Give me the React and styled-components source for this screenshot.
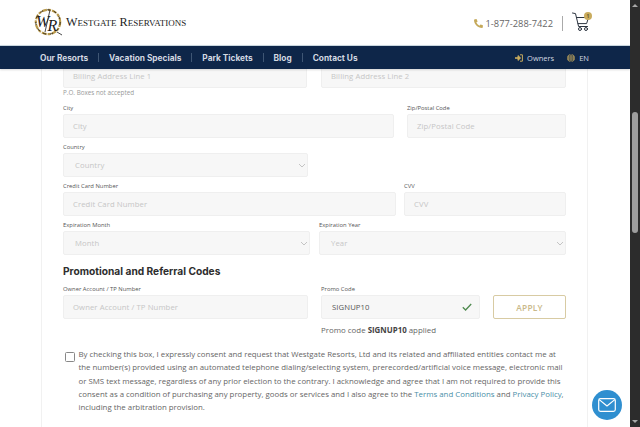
import React from "react";
import styled, { createGlobalStyle } from "styled-components";
import { FaPhoneAlt } from "react-icons/fa";

const Global = createGlobalStyle`
  html, body { margin: 0; padding: 0; height: 100%; overflow: hidden; background: #fff; }
  #root { height: 100%; }
  * { box-sizing: border-box; }
`;

const Shell = styled.div`
  display: flex; width: 640px; height: 427px; overflow: hidden;
  font-family: "Open Sans", "Liberation Sans", sans-serif; color: #666;
`;
const Page = styled.div`
  position: relative; width: 630px; height: 427px; display: flex; flex-direction: column; overflow: hidden;
`;
const Scrollbar = styled.div`
  width: 10px; height: 427px; background: #2c2c2c; display: flex; flex-direction: column; align-items: center; justify-content: space-between;
`;
const Track = styled.div`
  flex: 1; width: 100%; padding: 101px 0 0 2px;
`;
const Thumb = styled.div`
  height: 121px; border-radius: 3px; background: #9d9d9d; width: 6px;
`;
const Arrow = styled.div`
  width: 0; height: 0; margin: 4px 0; border-left: 3.5px solid transparent; border-right: 3.5px solid transparent;
  ${p => p.$down ? "border-top: 3.5px solid #a8a8a8;" : "border-bottom: 3.5px solid #a8a8a8;"}
`;

const Header = styled.header`
  height: 45px; flex: none; display: flex; align-items: center; justify-content: space-between; padding: 0 38px 0 33px; background: #fff;
`;
const Brand = styled.div`display: flex; align-items: center; gap: 3px; margin-top: -1px;`;
const Wordmark = styled.span`
  font: 500 12.2px "Liberation Serif", serif; font-variant: small-caps; color: #222; white-space: nowrap;
`;
const HeaderRight = styled.div`display: flex; align-items: center; margin-top: 1px;`;
const Phone = styled.span`
  display: flex; align-items: center; gap: 3px; font-size: 9.3px; color: #666; white-space: nowrap;
  svg { color: #c5a95a; width: 9px; height: 9px; }
`;
const VBar = styled.span`width: 1px; height: 15px; background: #aaa; margin: 0 9px;`;
const Cart = styled.div`position: relative; width: 20px; height: 20px; margin-top: -2px;`;
const Badge = styled.span`
  position: absolute; right: 0; top: 0; width: 8px; height: 8px; border-radius: 50%; background: #c9ac5e;
  color: #6b5a25; font: 700 5px/8px "Open Sans", sans-serif; text-align: center;
`;

const Nav = styled.nav`
  height: 24px; flex: none; background: #0e2649; border-top: 1px solid #c9d6de; display: flex; align-items: center; justify-content: space-between;
  padding: 0 41px 0 40px; position: relative; z-index: 2; box-shadow: 0 1px 2px rgba(0,0,0,.15);
`;
const NavLinks = styled.div`display: flex; align-items: center;`;
const NavLink = styled.a`
  font: 700 8.3px "Inter", "Open Sans", sans-serif; color: #d3d9e2; white-space: nowrap;
`;
const NavSep = styled.span`width: 1px; height: 9px; background: #3f5674; margin: 0 10px;`;
const NavTools = styled.div`display: flex; align-items: center; gap: 13px;`;
const NavTool = styled.span`
  display: flex; align-items: center; gap: 4px; font-size: 7.5px; color: #d3d9e2;
`;

const Main = styled.main`flex: 1; overflow: hidden; padding: 0 41px; min-height: 0;`;
const Card = styled.section`
  width: 547px; margin-top: -5px; padding: 0 21px; border-left: 1px solid #f1f1f1; border-right: 1px solid #f1f1f1; height: 380px;
`;
const Row = styled.div`
  display: flex; justify-content: space-between; align-items: flex-start; margin-top: ${p => p.$mt ?? 4}px;
`;
const Field = styled.div`width: ${p => p.$w}px; flex: none;`;
const Label = styled.label`
  display: block; height: 11px; font-size: 5.85px; line-height: 11px; color: #555; white-space: nowrap;
`;
const InputBox = styled.div`
  height: 24px; background: #f7f7f7; border: 1px solid #efefef; border-radius: 2px; display: flex; align-items: center; justify-content: space-between;
  padding: 0 ${p => p.$select ? 0 : 7}px 0 ${p => p.$select ? 11 : p.$filled ? 10 : 9}px; font-size: 7.7px; color: ${p => p.$filled ? "#555" : "#c6c6c6"}; white-space: nowrap; letter-spacing: .1px;
`;
const Chevron = styled.svg`width: 8px; height: 5px; flex: none; margin-right: 1px;`;
const Note = styled.p`margin: 0; height: 10px; font-size: 6.3px; line-height: 10px; color: #999;`;
const Heading = styled.h2`
  margin: 10px 0 0; height: 13px; font: 700 10.2px/13px "Inter", "Open Sans", sans-serif; color: #2e2e2e; white-space: nowrap;
`;
const ApplyButton = styled.button`
  width: 73px; height: 24px; margin-top: 11px; border: 1px solid #d8cba3; border-radius: 2px; background: #fff; color: #c9b98a;
  font: 600 8.4px "Open Sans", sans-serif; padding: 0; letter-spacing: .2px;
`;
const PromoLine = styled.p`
  margin: 5px 0 0 258px; height: 12px; font-size: 7.9px; line-height: 12px; color: #666; white-space: nowrap;
  b { color: #444; }
`;
const Consent = styled.div`
  display: flex; gap: 4px; margin-top: 12px; padding-left: 2px;
`;
const Box = styled.span`
  width: 9.5px; height: 9.5px; flex: none; margin-top: 4px; border: 1px solid #888; border-radius: 1.5px; background: #fff;
`;
const ConsentText = styled.p`
  margin: 0; font-size: 7.85px; line-height: 13.3px; color: #666; width: 488px;
  a { color: #4a8fa8; text-decoration: none; }
`;
const Chat = styled.button`
  position: absolute; right: 8px; top: 390px; width: 30px; height: 30px; border-radius: 50%; background: #2f8fd0; border: 0; padding: 0;
  display: flex; align-items: center; justify-content: center; z-index: 3;
`;

const Logo = () => (
  <svg width="30" height="28" viewBox="0 0 30 28">
    <circle cx="15" cy="14" r="12.2" fill="none" stroke="#b99a4c" strokeWidth="2.2" strokeDasharray="5 1.2 3 1" />
    <circle cx="15" cy="14" r="12.2" fill="none" stroke="#2a2415" strokeWidth=".9" strokeDasharray="3 4" />
    <text x="3" y="18.5" fontFamily="Liberation Serif, serif" fontStyle="italic" fontSize="16" fill="#1c1c1c">W</text>
    <text x="14.5" y="22.5" fontFamily="Liberation Serif, serif" fontStyle="italic" fontSize="16" fill="#1c1c1c">R</text>
    <path d="M17 2 L12 24 M24 24 L29 27" stroke="#1c1c1c" strokeWidth=".8" fill="none" />
  </svg>
);
const CartIcon = () => (
  <svg width="20" height="20" viewBox="0 0 20 20" fill="none" stroke="#2c3440" strokeWidth="1" strokeLinecap="round" strokeLinejoin="round">
    <path d="M.5 1 L3.5 1.6 L6.6 14.5 H15.5" />
    <path d="M4.6 5.5 H16.5 L14.6 11.6 H6" />
    <circle cx="8" cy="17" r="1.5" />
    <circle cx="14" cy="17" r="1.5" />
  </svg>
);
const OwnerIcon = () => (
  <svg width="8" height="8" viewBox="0 0 8 8" fill="none" stroke="#c9ac5e" strokeWidth="1">
    <path d="M0 4 H4.5" strokeWidth="1.6" />
    <path d="M3 1.6 L5.6 4 L3 6.4 Z" fill="#c9ac5e" />
    <path d="M5 .8 H7.4 V7.2 H5" />
  </svg>
);
const GlobeIcon = () => (
  <svg width="8" height="8" viewBox="0 0 8 8">
    <circle cx="4" cy="4" r="3.8" fill="#c9ac5e" />
    <path d="M.3 4 H7.7 M4 .2 V7.8 M1 2 H7 M1 6 H7" stroke="#0e2649" strokeWidth=".5" />
    <ellipse cx="4" cy="4" rx="1.8" ry="3.8" fill="none" stroke="#0e2649" strokeWidth=".5" />
  </svg>
);
const Down = () => (
  <Chevron viewBox="0 0 8 5" fill="none" stroke="#c4c4c4" strokeWidth="1">
    <path d="M1 1 L4 4 L7 1" />
  </Chevron>
);

const Input = ({ w, label, children, select, filled, after }) => (
  <Field $w={w}>
    {label && <Label>{label}</Label>}
    <InputBox $select={select} $filled={filled}>
      <span>{children}</span>
      {select && <Down />}
      {after}
    </InputBox>
  </Field>
);

export default function App() {
  return (
    <Shell>
      <Global />
      <Page>
        <Header>
          <Brand>
            <Logo />
            <Wordmark>Westgate Reservations</Wordmark>
          </Brand>
          <HeaderRight>
            <Phone><FaPhoneAlt />1-877-288-7422</Phone>
            <VBar />
            <Cart><CartIcon /><Badge>1</Badge></Cart>
          </HeaderRight>
        </Header>
        <Nav>
          <NavLinks>
            <NavLink>Our Resorts</NavLink>
            <NavSep />
            <NavLink>Vacation Specials</NavLink>
            <NavSep />
            <NavLink>Park Tickets</NavLink>
            <NavSep />
            <NavLink>Blog</NavLink>
            <NavSep />
            <NavLink>Contact Us</NavLink>
          </NavLinks>
          <NavTools>
            <NavTool><OwnerIcon />Owners</NavTool>
            <NavTool><GlobeIcon />EN</NavTool>
          </NavTools>
        </Nav>
        <Main>
          <Card>
            <Row $mt={0}>
              <Input w={244}>Billing Address Line 1</Input>
              <Input w={245}>Billing Address Line 2</Input>
            </Row>
            <Note>P.O. Boxes not accepted</Note>
            <Row $mt={5}>
              <Input w={331} label="City">City</Input>
              <Input w={159} label="Zip/Postal Code">Zip/Postal Code</Input>
            </Row>
            <Row>
              <Input w={245} label="Country" select>Country</Input>
            </Row>
            <Row>
              <Input w={333} label="Credit Card Number">Credit Card Number</Input>
              <Input w={162} label="CVV">CVV</Input>
            </Row>
            <Row>
              <Input w={247} label="Expiration Month" select>Month</Input>
              <Input w={247} label="Expiration Year" select>Year</Input>
            </Row>
            <Heading>Promotional and Referral Codes</Heading>
            <Row $mt={6}>
              <Input w={245} label="Owner Account / TP Number">Owner Account / TP Number</Input>
              <Input w={159} label="Promo Code" filled after={
                <svg width="10" height="8" viewBox="0 0 10 8" fill="none" stroke="#4f8a4f" strokeWidth="1.3"><path d="M.8 4.2 L3.6 7 L9.2 1" /></svg>
              }>SIGNUP10</Input>
              <ApplyButton>APPLY</ApplyButton>
            </Row>
            <PromoLine>Promo code <b>SIGNUP10</b> applied</PromoLine>
            <Consent>
              <Box />
              <ConsentText>
                By checking this box, I expressly consent and request that Westgate Resorts, Ltd and its related and affiliated entities contact me at the number(s) provided using an automated telephone dialing/selecting system, prerecorded/artificial voice message, electronic mail or SMS text message, regardless of any prior election to the contrary. I acknowledge and agree that I am not required to provide this consent as a condition of purchasing any property, goods or services and I also agree to the <a>Terms and Conditions</a> and <a>Privacy Policy</a>, including the arbitration provision.
              </ConsentText>
            </Consent>
          </Card>
        </Main>
        <Chat aria-label="Contact">
          <svg width="18" height="14" viewBox="0 0 18 14" fill="none" stroke="#fff" strokeWidth="1.2" strokeLinejoin="round">
            <rect x=".7" y=".7" width="16.6" height="12.6" rx="1.8" />
            <path d="M1.2 1.6 L9 8 L16.8 1.6" />
          </svg>
        </Chat>
      </Page>
      <Scrollbar>
        <Arrow />
        <Track><Thumb /></Track>
        <Arrow $down />
      </Scrollbar>
    </Shell>
  );
}
